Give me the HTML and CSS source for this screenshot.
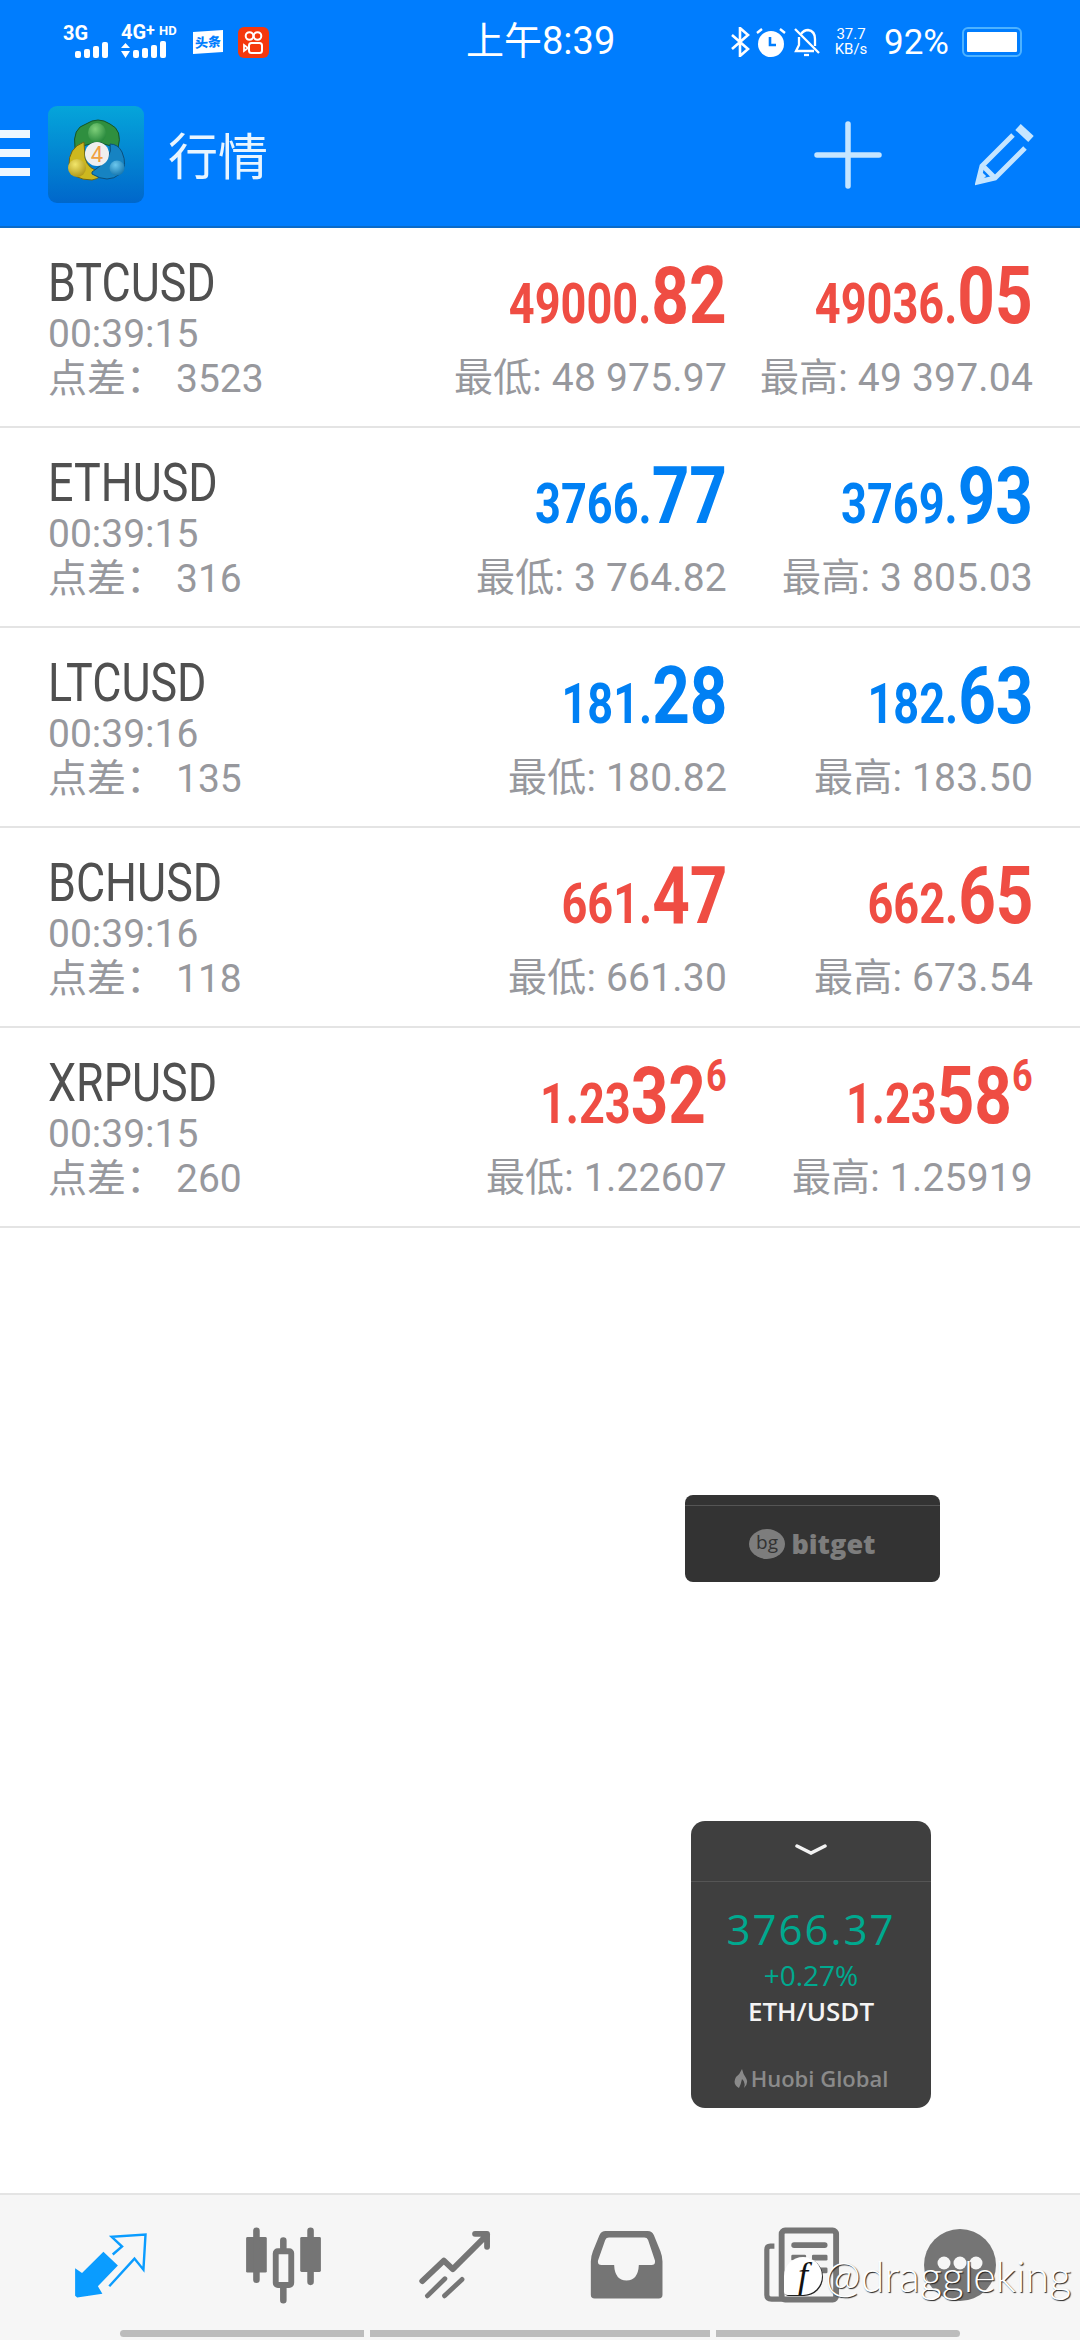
FILE: index.html
```html
<!DOCTYPE html>
<html lang="zh-CN">
<head>
    <meta charset="UTF-8">
    <title>行情</title>
    <link rel="stylesheet" href="styles.css">
</head>
<body>
<div class="phone">
    <div class="top">
        <div class="status">
            <div class="status-left">
                <svg class="signal" width="50" height="40" viewBox="0 0 50 40">
                    <text x="0" y="22" class="sig-text">3G</text>
                    <rect x="12" y="33" width="6" height="7" rx="2" fill="#fff"/>
                    <rect x="21" y="31" width="6" height="9" rx="2" fill="#fff"/>
                    <rect x="30" y="28" width="6" height="12" rx="2" fill="#fff"/>
                    <rect x="39" y="24" width="6" height="16" rx="2" fill="#fff"/>
                </svg>
                <svg class="signal" width="60" height="42" viewBox="0 0 60 42">
                    <text x="0" y="22" class="sig-text">4G</text>
                    <text x="25" y="19" class="sig-plus">+</text>
                    <text x="38" y="18" class="sig-small">HD</text>
                    <path d="M0 31 L4.500 26 L9 31Z M0 34 L9 34 L4.500 41Z" fill="#fff"/>
                    <rect x="12" y="33" width="6" height="8" rx="2" fill="#fff"/>
                    <rect x="21" y="31" width="6" height="10" rx="2" fill="#fff"/>
                    <rect x="30" y="28" width="6" height="13" rx="2" fill="#fff"/>
                    <rect x="39" y="24" width="6" height="17" rx="2" fill="#fff"/>
                </svg>
                <div class="toutiao">头条</div>
                <svg class="ks" width="31" height="31" viewBox="0 0 31 31">
                    <rect width="31" height="31" rx="6" fill="#f5380d"/>
                    <circle cx="11.500" cy="9" r="3.800" fill="none" stroke="#fff" stroke-width="2"/>
                    <circle cx="19.500" cy="9" r="3.800" fill="none" stroke="#fff" stroke-width="2"/>
                    <rect x="11" y="16" width="13" height="10" rx="2.500" fill="none" stroke="#fff" stroke-width="2"/>
                    <path d="M6 18 L10 21 L6 24Z" fill="none" stroke="#fff" stroke-width="1.800"/>
                </svg>
            </div>
            <div class="clock">上午8:39</div>
            <div class="status-right">
                <svg width="19" height="30" viewBox="0 0 19 30" fill="none" stroke="#fff" stroke-width="2.600">
                    <path d="M1 8 L17 22 L9 29 V1 L17 8 L1 22"/>
                </svg>
                <svg class="alarm" width="30" height="31" viewBox="0 0 30 31">
                    <circle cx="15" cy="17" r="13" fill="#fff"/>
                    <path d="M14 10 V18 H20" fill="none" stroke="#007dfe" stroke-width="2.600"/>
                    <path d="M1 6 L6 2 M29 6 L24 2" stroke="#fff" stroke-width="2.400"/>
                </svg>
                <svg class="mute" width="26" height="30" viewBox="0 0 26 30" fill="none" stroke="#fff" stroke-width="2.300">
                    <path d="M7 7 Q10 3 14 3 Q21 4 21 12 V19 M5 10 V18 L2 24 H20"/>
                    <path d="M1 2 L25 26"/>
                    <path d="M10 28 H15"/>
                </svg>
                <div class="speed"><span>37.7</span><span>KB/s</span></div>
                <div class="percent">92%</div>
                <div class="battery"><div class="battery-fill"></div></div>
            </div>
        </div>
        <div class="toolbar">
            <div class="burger"><i></i><i></i><i></i></div>
            <svg class="logo" width="96" height="97" viewBox="0 0 96 97">
                <defs>
                    <linearGradient id="logoBg" x1="0" y1="0" x2="0" y2="1">
                        <stop offset="0" stop-color="#05a5da"/>
                        <stop offset="1" stop-color="#0067cb"/>
                    </linearGradient>
                    <radialGradient id="ballG" cx=".4" cy=".3" r=".8">
                        <stop offset="0" stop-color="#7fd07a"/>
                        <stop offset="1" stop-color="#1c7f34"/>
                    </radialGradient>
                    <radialGradient id="ballY" cx=".4" cy=".3" r=".8">
                        <stop offset="0" stop-color="#f2e66b"/>
                        <stop offset="1" stop-color="#a98f10"/>
                    </radialGradient>
                    <radialGradient id="ballB" cx=".4" cy=".3" r=".8">
                        <stop offset="0" stop-color="#6cc8ee"/>
                        <stop offset="1" stop-color="#0d6ea8"/>
                    </radialGradient>
                </defs>
                <rect width="96" height="97" rx="9" fill="url(#logoBg)"/>
                <path d="M27 42 Q24 22 38 18 Q50 10 62 18 Q75 24 70 42 L56 38 Q50 34 42 38Z" fill="#2f8f3f" stroke="#14552a" stroke-width="1"/>
                <path d="M36 36 Q20 42 21 60 Q24 74 44 74 Q54 72 54 66 Q40 64 37 52Z" fill="#cdb81f" stroke="#6f6412" stroke-width="1"/>
                <path d="M44 68 Q60 78 72 68 Q80 60 74 46 Q70 38 62 38 Q66 52 44 66Z" fill="#1683c2" stroke="#0b4f7c" stroke-width="1"/>
                <ellipse cx="49" cy="27" rx="9" ry="10" fill="url(#ballG)"/>
                <circle cx="29" cy="62" r="9" fill="url(#ballY)"/>
                <circle cx="69" cy="62" r="7.500" fill="url(#ballB)"/>
                <circle cx="49" cy="48" r="12" fill="#efefef"/>
                <text x="49" y="56" text-anchor="middle" class="logo-four">4</text>
            </svg>
            <div class="title">行情</div>
            <svg class="add" width="68" height="68" viewBox="0 0 68 68" stroke="#c5e5ff" stroke-width="5.500" stroke-linecap="round">
                <path d="M34 3 V65 M3 34 H65"/>
            </svg>
            <svg class="pencil" width="60" height="62" viewBox="0 0 60 62" fill="none" stroke="#c5e5ff" stroke-width="5">
                <path d="M38 11 L7 42 L3 58 L20 54 L50 24"/>
                <path d="M9 43 L19 53" />
                <path d="M5 54 L9 50" stroke-width="6"/>
                <path d="M43 3 L56 15" stroke-width="8"/>
            </svg>
        </div>
    </div>

    <div class="list">
        <div class="row">
            <div class="info">
                <div class="symbol"><span>BTCUSD</span></div>
                <div class="sub">00:39:15</div>
                <div class="sub">点差：<b>3523</b></div>
            </div>
            <div class="quote red">
                <div class="price"><span class="inner"><small>49000.</small>82</span></div>
                <div class="range">最低: 48 975.97</div>
            </div>
            <div class="quote red">
                <div class="price"><span class="inner"><small>49036.</small>05</span></div>
                <div class="range">最高: 49 397.04</div>
            </div>
        </div>
        <div class="row">
            <div class="info">
                <div class="symbol"><span>ETHUSD</span></div>
                <div class="sub">00:39:15</div>
                <div class="sub">点差：<b>316</b></div>
            </div>
            <div class="quote blue">
                <div class="price"><span class="inner"><small>3766.</small>77</span></div>
                <div class="range">最低: 3 764.82</div>
            </div>
            <div class="quote blue">
                <div class="price"><span class="inner"><small>3769.</small>93</span></div>
                <div class="range">最高: 3 805.03</div>
            </div>
        </div>
        <div class="row">
            <div class="info">
                <div class="symbol"><span>LTCUSD</span></div>
                <div class="sub">00:39:16</div>
                <div class="sub">点差：<b>135</b></div>
            </div>
            <div class="quote blue">
                <div class="price"><span class="inner"><small>181.</small>28</span></div>
                <div class="range">最低: 180.82</div>
            </div>
            <div class="quote blue">
                <div class="price"><span class="inner"><small>182.</small>63</span></div>
                <div class="range">最高: 183.50</div>
            </div>
        </div>
        <div class="row">
            <div class="info">
                <div class="symbol"><span>BCHUSD</span></div>
                <div class="sub">00:39:16</div>
                <div class="sub">点差：<b>118</b></div>
            </div>
            <div class="quote red">
                <div class="price"><span class="inner"><small>661.</small>47</span></div>
                <div class="range">最低: 661.30</div>
            </div>
            <div class="quote red">
                <div class="price"><span class="inner"><small>662.</small>65</span></div>
                <div class="range">最高: 673.54</div>
            </div>
        </div>
        <div class="row">
            <div class="info">
                <div class="symbol"><span>XRPUSD</span></div>
                <div class="sub">00:39:15</div>
                <div class="sub">点差：<b>260</b></div>
            </div>
            <div class="quote red">
                <div class="price"><span class="inner"><small>1.23</small>32<sup>6</sup></span></div>
                <div class="range">最低: 1.22607</div>
            </div>
            <div class="quote red">
                <div class="price"><span class="inner"><small>1.23</small>58<sup>6</sup></span></div>
                <div class="range">最高: 1.25919</div>
            </div>
        </div>
    </div>

    <div class="nav">
        <div class="tab">
            <svg width="76" height="69" viewBox="210 190 220 200">
                <path d="M216 298 L236 312 L298 250 L340 290 L282 350 L295 372 L222 383 L216 378Z" fill="#0a9cff"/>
                <path d="M325 258 L352 235 L322 207 L420 200 L414 302 L388 270 L315 350" fill="none" stroke="#0a9cff" stroke-width="7"/>
            </svg>
        </div>
        <div class="tab">
            <svg width="81" height="81" viewBox="700 170 235 235" fill="#757575">
                <rect x="709" y="205" width="60" height="103" rx="4"/>
                <path d="M739 187 V329 M896 187 V335 M817 215 V238 M817 352 V388" stroke="#757575" stroke-width="19" stroke-linecap="round"/>
                <rect x="795" y="246" width="45" height="98" rx="6" fill="none" stroke="#757575" stroke-width="17"/>
                <rect x="866" y="205" width="60" height="101" rx="4"/>
            </svg>
        </div>
        <div class="tab tab-trend">
            <svg width="78" height="72" viewBox="1205 180 225 210" fill="none" stroke="#757575" stroke-linecap="round" stroke-linejoin="round">
                <path d="M1222 332 L1285 272 L1311 297 L1411 197 M1376 194 H1411 V232" stroke-width="17"/>
                <path d="M1237 375 L1288 325 M1287 375 L1338 327" stroke-width="14"/>
            </svg>
        </div>
        <div class="tab tab-inbox">
            <svg width="78" height="72" viewBox="140 180 225 210">
                <path fill="#757575" fill-rule="evenodd" d="M190 186 H313 Q325 186 331 198 L350 245 Q356 260 356 275 V372 Q356 383 345 383 H158 Q147 383 147 372 V275 Q147 260 153 245 L172 198 Q178 186 190 186Z M200 205 Q192 205 189 212 L168 272 Q166 285 178 285 H215 Q217 330 251 330 Q285 330 287 285 H324 Q336 285 334 272 L314 212 Q311 205 303 205Z"/>
            </svg>
        </div>
        <div class="tab">
            <svg width="81" height="80" viewBox="640 170 235 230">
                <path d="M676 230 H664 Q654 230 654 240 V372 Q654 384 668 384 H700" fill="none" stroke="#757575" stroke-width="15"/>
                <rect x="697" y="185" width="158" height="200" rx="10" fill="none" stroke="#757575" stroke-width="17"/>
                <rect x="725" y="219" width="105" height="17" rx="8" fill="#757575"/>
                <rect x="725" y="255" width="43" height="17" rx="4" fill="#757575"/>
                <rect x="785" y="255" width="45" height="17" rx="4" fill="#757575"/>
                <rect x="725" y="292" width="105" height="17" rx="4" fill="#757575"/>
            </svg>
        </div>
        <div class="tab tab-more">
            <svg width="72" height="72" viewBox="0 0 72 72">
                <circle cx="36" cy="36" r="36" fill="#757575"/>
                <circle cx="20" cy="34" r="6.500" fill="#f6f6f6"/>
                <circle cx="36" cy="34" r="6.500" fill="#f6f6f6"/>
                <circle cx="52" cy="34" r="6.500" fill="#f6f6f6"/>
            </svg>
        </div>
        <div class="scrollbar"><i></i><i class="mid"></i><i></i></div>
    </div>

    <!-- floating windows from other apps -->
    <div class="bitget">
        <svg width="36" height="30" viewBox="0 0 36 30">
            <ellipse cx="18" cy="15" rx="18" ry="15" fill="#7d7d7d"/>
            <text x="18" y="20" text-anchor="middle" class="bg-mark">bg</text>
        </svg>
        <span>bitget</span>
    </div>
    <div class="huobi">
        <div class="huobi-top">
            <svg width="32" height="14" viewBox="0 0 32 14" fill="none" stroke="#f2f2f2" stroke-width="3.500" stroke-linecap="round">
                <path d="M2 3 L16 10 L30 3"/>
            </svg>
        </div>
        <div class="huobi-price">3766.37</div>
        <div class="huobi-change">+0.27%</div>
        <div class="huobi-pair">ETH/USDT</div>
        <div class="huobi-brand">
            <svg width="14" height="19" viewBox="0 0 14 19">
                <path d="M8 0 Q9 5 12 9 Q15 14 10 19 Q12 13 8 10 Q7 15 5 19 Q-2 15 2 8 Q6 5 8 0Z" fill="#8a8a8a"/>
            </svg>
            <span>Huobi Global</span>
        </div>
    </div>
    <div class="mark">
        <div class="mark-bubble">f</div>
        <span>@draggleking</span>
    </div>
</div>
</body>
</html>
```

FILE: styles.css
```css
*{
    margin: 0;
    padding: 0;
    box-sizing: border-box;
}
body{
    background: #fff;
    font-family: Roboto, "Noto Sans CJK SC", sans-serif;
}
.phone{
    position: relative;
    width: 1080px;
    height: 2340px;
    display: flex;
    flex-direction: column;
    overflow: hidden;
}
.top{
    height: 228px;
    background: #007dfe;
    color: #fff;
    border-bottom: 2px solid #0a6bc9;
}
.status{
    height: 82px;
    position: relative;
    display: flex;
    justify-content: space-between;
    align-items: center;
    padding: 0 58px 0 63px;
}
.status-left{
    display: flex;
    align-items: center;
    gap: 8px;
    padding-top: 2px;
}
.signal{
    margin-top: -8px;
}
.status-right{
    display: flex;
    align-items: center;
    padding-top: 2px;
}
.sig-text{
    font: 700 20px Roboto, sans-serif;
    fill: #fff;
}
.sig-plus{
    font: 700 16px Roboto, sans-serif;
    fill: #fff;
}
.sig-small{
    font: 700 13px Roboto, sans-serif;
    fill: #fff;
}
.toutiao{
    width: 30px;
    height: 22px;
    margin-left: 4px;
    background: #fff;
    color: #007dfe;
    font: 900 13px/22px "Noto Sans CJK SC", sans-serif;
    text-align: center;
    white-space: nowrap;
    transform: skewY(-4deg);
}
.ks{
    margin-left: 7px;
}
.clock{
    position: absolute;
    left: 466px;
    top: 19px;
    font: 400 38px/44px Roboto, "Noto Sans CJK SC", sans-serif;
    white-space: nowrap;
}
.alarm{
    margin-left: 6px;
}
.mute{
    margin-left: 8px;
}
.speed{
    margin-left: 12px;
    width: 38px;
    display: flex;
    flex-direction: column;
    font-size: 15px;
    line-height: 15px;
    text-align: center;
    white-space: nowrap;
}
.percent{
    margin-left: 14px;
    font-size: 35px;
    white-space: nowrap;
}
.battery{
    margin-left: 13px;
    width: 60px;
    height: 30px;
    padding: 3px;
    border: 2px solid #4db2ff;
    border-radius: 6px;
}
.battery-fill{
    height: 100%;
    background: #fff;
    border-radius: 1px;
}
.toolbar{
    height: 144px;
    display: flex;
    align-items: center;
    padding-bottom: 2px;
}
.burger{
    width: 30px;
    display: flex;
    flex-direction: column;
    gap: 11px;
}
.burger i{
    display: block;
    height: 8px;
    background: #eef7ff;
}
.logo{
    margin: 3px 0 0 18px;
}
.logo-four{
    font: 400 22px Roboto, sans-serif;
    fill: #f0a040;
}
.title{
    margin-left: 24px;
    font: 400 50px "Noto Sans CJK SC", sans-serif;
    color: #e8f5ff;
    flex: 1;
}
.add{
    margin-top: 3px;
}
.pencil{
    margin: 3px 45px 0 93px;
}
.list{
    flex: 1;
}
.row{
    height: 200px;
    padding: 28px 47px 25px 48px;
    display: flex;
    border-bottom: 2px solid #e4e4e4;
}
.info{
    flex: 1;
}
.symbol{
    height: 56px;
    color: #505050;
    font-size: 54px;
    line-height: 54px;
}
.symbol span{
    display: inline-block;
    transform: scaleX(0.83);
    transform-origin: left;
}
.sub{
    height: 45px;
    color: #97989d;
    font-size: 39px;
    line-height: 45px;
    white-space: nowrap;
}
.sub b{
    font-weight: 400;
    margin-left: 11px;
}
.quote{
    width: 306px;
    display: flex;
    flex-direction: column;
    justify-content: flex-end;
    align-items: flex-end;
}
.red{
    color: #ef4d43;
}
.blue{
    color: #0080f4;
}
.price{
    font-size: 80px;
    line-height: 82px;
    font-weight: 700;
    margin-bottom: 19px;
    white-space: nowrap;
}
.inner{
    display: inline-block;
    transform: scaleX(0.82);
    transform-origin: right;
}
.price small{
    font-size: 55px;
    line-height: 1;
}
.price sup{
    font-size: 44px;
    line-height: 1;
    vertical-align: 32px;
    font-weight: 700;
}
.range{
    height: 45px;
    color: #97989d;
    font-size: 39px;
    line-height: 45px;
    letter-spacing: 0.2px;
    white-space: nowrap;
}
.nav{
    height: 147px;
    background: #f6f6f6;
    border-top: 2px solid #e4e4e4;
    padding: 30px 18px 0 24px;
    display: grid;
    grid-template-columns: repeat(6, 1fr);
    align-items: start;
    justify-items: center;
    position: relative;
}
.tab{
    height: 80px;
    display: flex;
    align-items: center;
}
.tab-trend{
    margin-right: 3px;
}
.tab-inbox{
    margin-right: 6px;
}
.tab-more{
    margin-right: 32px;
}
.scrollbar{
    position: absolute;
    left: 120px;
    bottom: 3px;
    width: 840px;
    display: flex;
    gap: 6px;
}
.scrollbar i{
    display: block;
    flex: 244px 0 0;
    height: 7px;
    background: #bcbcbc;
}
.scrollbar i:first-child{
    border-radius: 4px 0 0 4px;
}
.scrollbar i:last-child{
    border-radius: 0 4px 4px 0;
}
.scrollbar .mid{
    flex-basis: 340px;
}
.bitget{
    position: absolute;
    left: 685px;
    top: 1495px;
    width: 255px;
    height: 87px;
    background: #333;
    border-radius: 8px;
    display: flex;
    align-items: center;
    justify-content: center;
    gap: 6px;
    padding-top: 10px;
    color: #7d7d7d;
    font: 800 27px "Open Sans", sans-serif;
}
.bitget::before{
    content: "";
    position: absolute;
    left: 0;
    right: 0;
    top: 10px;
    height: 1px;
    background: #555;
}
.bg-mark{
    font: 400 19px "Open Sans", sans-serif;
    fill: #333;
}
.huobi{
    position: absolute;
    left: 691px;
    top: 1821px;
    width: 240px;
    height: 287px;
    background: #3f3f3f;
    border-radius: 14px;
    display: flex;
    flex-direction: column;
    align-items: center;
}
.huobi-top{
    width: 100%;
    height: 61px;
    border-bottom: 1px solid #555;
    display: flex;
    align-items: center;
    justify-content: center;
    padding-bottom: 2px;
}
.huobi-price{
    margin-top: 24px;
    color: #00a98f;
    font: 400 42px/46px "Open Sans", sans-serif;
    letter-spacing: 2px;
}
.huobi-change{
    margin-top: 6px;
    color: #00a98f;
    font: 400 28px/34px "Open Sans", sans-serif;
}
.huobi-pair{
    margin-top: 3px;
    color: #f4f4f4;
    font: 600 26px/32px "Open Sans", sans-serif;
}
.huobi-brand{
    margin-top: 38px;
    display: flex;
    align-items: center;
    gap: 3px;
    color: #8a8a8a;
    font: 600 22px/26px "Open Sans", sans-serif;
}
.mark{
    position: absolute;
    left: 784px;
    top: 2248px;
    display: flex;
    align-items: center;
    gap: 3px;
    color: #fff;
    font: 300 43px/56px Lato, sans-serif;
    text-shadow: 1px 1px 1px #222;
    white-space: nowrap;
}
.mark-bubble{
    width: 38px;
    height: 38px;
    border-radius: 50% 50% 50% 10%;
    background: #fff;
    box-shadow: 1px 1px 0 #222;
    color: #111;
    font: italic 400 36px/36px "Liberation Serif", serif;
    text-align: center;
    text-shadow: none;
}
```
